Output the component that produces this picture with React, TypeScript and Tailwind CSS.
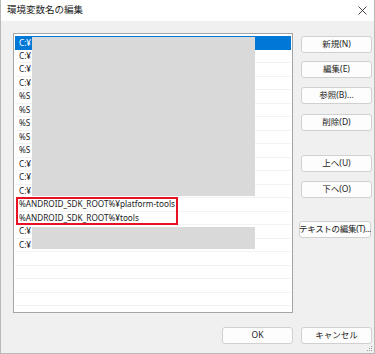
import type { ReactNode } from "react";

const rows: string[] = [
  "C:¥",
  "C:¥",
  "C:¥",
  "C:¥",
  "%S",
  "%S",
  "%S",
  "%S",
  "%S",
  "C:¥",
  "C:¥",
  "C:¥",
  "%ANDROID_SDK_ROOT%¥platform-tools",
  "%ANDROID_SDK_ROOT%¥tools",
  "C:¥",
  "C:¥",
  "",
  "",
  "",
  "",
  "",
];

function DlgButton({ children, className = "" }: { children: ReactNode; className?: string }) {
  return (
    <div
      className={[
        "flex h-[17px] w-[71px] items-center justify-center whitespace-nowrap rounded-[3px] border border-[#d0d0d0] bg-[#fdfdfd] text-[8.5px] text-[#1b1b1b]",
        className,
      ].join(" ")}
    >
      {children}
    </div>
  );
}

export default function App() {
  return (
    <div
      className="relative flex h-[354px] w-[375px] flex-col overflow-hidden border-x border-b border-[#b9b9b9] bg-[#f0f0f0]"
      style={{ fontFamily: '"Noto Sans", "Noto Sans CJK JP", sans-serif' }}
    >
      {/* title bar */}
      <div className="flex h-[21px] items-center justify-between bg-white pl-[6px] pr-[6px]">
        <span className="text-[9.5px] text-[#1b1b1b]">環境変数名の編集</span>
        <svg width="9" height="9" viewBox="0 0 9 9" className="mr-[1px]">
          <path d="M0.5 0.5 L8.5 8.5 M8.5 0.5 L0.5 8.5" stroke="#333" strokeWidth="0.9" fill="none" />
        </svg>
      </div>

      <div className="flex pl-[12px] pt-[12px]">
        {/* list */}
        <div className="relative h-[280px] w-[280px] overflow-hidden border border-[#a5a5a5] bg-white p-[1px]">
          <div className="pt-[1px]">
            {rows.map((text, i) => (
              <div
                key={i}
                className={[
                  "flex h-[13.5px] items-center whitespace-nowrap pl-[4px] text-[8.2px] leading-none",
                  i === 0 ? "bg-[#0078d7] text-white" : "border-b border-[#f2f2f2] text-[#1b1b1b]",
                ].join(" ")}
              >
                {text}
              </div>
            ))}
          </div>

          {/* redaction blocks */}
          <div className="absolute left-[18px] top-[3px] h-[159px] w-[223px] bg-[#d9d9d9]" />
          <div className="absolute left-[18px] top-[193px] h-[22px] w-[223px] bg-[#d9d9d9]" />

          {/* highlight */}
          <div className="absolute left-[2px] top-[163px] h-[28px] w-[162px] border-2 border-[#e81123]" />
        </div>

        {/* side buttons */}
        <div className="ml-[8px] flex flex-col">
          <DlgButton className="mt-[3px]">新規(N)</DlgButton>
          <DlgButton className="mt-[8px]">編集(E)</DlgButton>
          <DlgButton className="mt-[9px]">参照(B)...</DlgButton>
          <DlgButton className="mt-[10px]">削除(D)</DlgButton>
          <DlgButton className="mt-[24px]">上へ(U)</DlgButton>
          <DlgButton className="mt-[9px]">下へ(O)</DlgButton>
          <DlgButton className="-ml-[2px] mt-[23px] w-[72px] text-[7.8px] tracking-[-0.3px]">
            テキストの編集(T)...
          </DlgButton>
        </div>
      </div>

      {/* footer */}
      <div className="mt-[14px] flex justify-end gap-[8px] pr-[2px]">
        <DlgButton className="border-[#0067c0]">OK</DlgButton>
        <DlgButton>キャンセル</DlgButton>
      </div>

      {/* size grip */}
      <svg width="6" height="6" viewBox="0 0 6 6" className="absolute bottom-[1px] right-[1px]">
        <rect x="4" y="0" width="1" height="1" fill="#9a9a9a" />
        <rect x="2" y="2" width="1" height="1" fill="#9a9a9a" />
        <rect x="4" y="2" width="1" height="1" fill="#9a9a9a" />
        <rect x="0" y="4" width="1" height="1" fill="#9a9a9a" />
        <rect x="2" y="4" width="1" height="1" fill="#9a9a9a" />
        <rect x="4" y="4" width="1" height="1" fill="#9a9a9a" />
      </svg>
    </div>
  );
}
